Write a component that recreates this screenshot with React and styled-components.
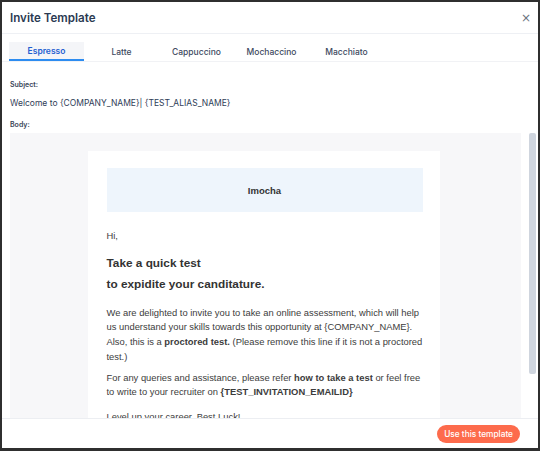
import React, { useState } from "react"
import styled, { createGlobalStyle } from "styled-components"

const GlobalStyle = createGlobalStyle`
    html, body {
        margin: 0;
        padding: 0;
        background: #ffffff;
    }
    * {
        box-sizing: border-box;
    }
`

const StyledFrame = styled.div`
    width: 540px;
    height: 451px;

    display: flex;
    flex-direction: column;

    border: 2px solid #2f2f2f;
    border-bottom-width: 3px;
    background: #ffffff;
    overflow: hidden;

    font-family: Inter, "Open Sans", sans-serif;
`

const StyledHeader = styled.div`
    height: 32px;
    padding: 0 7px 0 8px;

    display: flex;
    align-items: center;
    justify-content: space-between;

    border-bottom: 1px solid #eef0f4;
`

const StyledTitle = styled.h1`
    margin: 0;

    font-size: 11.6px;
    font-weight: 600;
    color: #2b3a52;
`

const StyledClose = styled.button`
    padding: 0;

    border: none;
    background: none;

    font-family: "DejaVu Sans", sans-serif;
    font-size: 12px;
    color: #6b7280;
`

const StyledTabs = styled.ul`
    margin: 8px 0 0;
    padding: 0 7px;

    display: flex;

    list-style: none;
    border-bottom: 1px solid #f1f2f5;
`

const StyledTab = styled.li`
    width: 75px;
    height: 19px;

    display: flex;
    align-items: center;
    justify-content: center;

    font-size: 8.5px;
    font-weight: 500;
    color: #3e4a61;

    ${props => props.active && `
        background: #f4f5f8;
        border-bottom: 2px solid #2d8cf0;
        color: #1f5fd1;
        font-weight: 600;
    `}
`

const StyledField = styled.div`
    padding: 0 8px;
`

const StyledLabel = styled.p`
    margin: ${props => props.first ? "18px" : "12px"} 0 0;

    font-size: 7px;
    font-weight: 600;
    color: #3a4558;
`

const StyledSubject = styled.p`
    margin: 9px 0 0;

    font-size: 8.5px;
    color: #2f3d57;
`

const StyledBodyWrap = styled.div`
    flex: 1;
    min-height: 0;
    margin: 4px 0 0;
    padding: 0 2px 0 8px;

    display: flex;
    gap: 8px;
`

const StyledBody = styled.div`
    flex: 1;
    padding: 18px 0 0;

    display: flex;
    justify-content: center;

    background: #f7f7f9;
    overflow: hidden;
`

const StyledScrollbar = styled.div`
    width: 7px;

    display: flex;
    flex-direction: column;
`

const StyledThumb = styled.div`
    width: 7px;
    height: 241px;

    border-radius: 2px;
    background: #cfd5de;
`

const StyledMail = styled.div`
    width: 352px;
    margin-right: 4px;
    padding: 17px 17px 0 19px;

    background: #ffffff;

    font-family: "Liberation Sans", Arial, sans-serif;
    color: #3c3c3c;
`

const StyledBrand = styled.div`
    height: 44px;

    display: flex;
    align-items: center;
    justify-content: center;

    background: #eef5fc;

    font-size: 9.5px;
    font-weight: 700;
    color: #333333;
`

const StyledText = styled.p`
    margin: ${props => props.gap || "0"};

    font-size: 9.4px;
    line-height: 14.7px;
`

const StyledHeading = styled.h2`
    margin: ${props => props.gap || "0"};

    font-size: 11.8px;
    font-weight: 700;
    line-height: 21px;
    color: #333333;
`

const StyledFooter = styled.div`
    height: 30px;
    padding: 1px 18px 0 0;

    display: flex;
    align-items: center;
    justify-content: flex-end;

    border-top: 1px solid #eceef2;
`

const StyledButton = styled.button`
    height: 18px;
    padding: 0 7px;

    border: none;
    border-radius: 9px;
    background: #fd6b4c;

    font-family: Inter, "Open Sans", sans-serif;
    font-size: 8.3px;
    font-weight: 500;
    color: #ffffff;
`

const tabs = ["Espresso", "Latte", "Cappuccino", "Mochaccino", "Macchiato"]

const App = () => {
    const [active, setActive] = useState(0)

    return (
        <>
            <GlobalStyle />
            <StyledFrame>
                <StyledHeader>
                    <StyledTitle>Invite Template</StyledTitle>
                    <StyledClose>×</StyledClose>
                </StyledHeader>
                <StyledTabs>
                    {tabs.map((tab, index) => (
                        <StyledTab
                            key={tab}
                            active={index === active}
                            onClick={() => setActive(index)}
                        >
                            {tab}
                        </StyledTab>
                    ))}
                </StyledTabs>
                <StyledField>
                    <StyledLabel first>Subject:</StyledLabel>
                    <StyledSubject>Welcome to {"{COMPANY_NAME}"}| {"{TEST_ALIAS_NAME}"}</StyledSubject>
                    <StyledLabel>Body:</StyledLabel>
                </StyledField>
                <StyledBodyWrap>
                    <StyledBody>
                        <StyledMail>
                            <StyledBrand>Imocha</StyledBrand>
                            <StyledText gap="17px 0 0">Hi,</StyledText>
                            <StyledHeading gap="9px 0 0">Take a quick test</StyledHeading>
                            <StyledHeading>to expidite your canditature.</StyledHeading>
                            <StyledText gap="11px 0 0">
                                We are delighted to invite you to take an online assessment, which will help
                                us understand your skills towards this opportunity at {"{COMPANY_NAME}"}.
                                Also, this is a <b>proctored test.</b> (Please remove this line if it is not a proctored
                                test.)
                            </StyledText>
                            <StyledText gap="6px 0 0">
                                For any queries and assistance, please refer <b>how to take a test</b> or feel free
                                to write to your recruiter on <b>{"{TEST_INVITATION_EMAILID}"}</b>
                            </StyledText>
                            <StyledText gap="10px 0 0">Level up your career. Best Luck!</StyledText>
                        </StyledMail>
                    </StyledBody>
                    <StyledScrollbar>
                        <StyledThumb />
                    </StyledScrollbar>
                </StyledBodyWrap>
                <StyledFooter>
                    <StyledButton>Use this template</StyledButton>
                </StyledFooter>
            </StyledFrame>
        </>
    )
}

export default App
